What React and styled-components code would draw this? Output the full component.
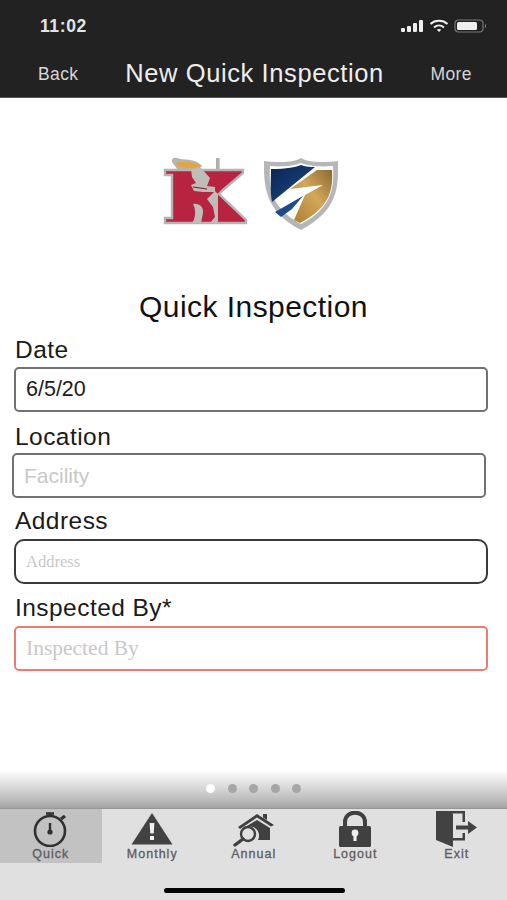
import React from "react";
import styled, { createGlobalStyle } from "styled-components";

const GlobalStyle = createGlobalStyle`
  html, body {
    margin: 0;
    padding: 0;
    background: #fff;
  }
  * {
    box-sizing: border-box;
  }
`;

const Page = styled.div`
  width: 507px;
  height: 900px;
  display: flex;
  flex-direction: column;
  overflow: hidden;
  font-family: "Liberation Sans", Arial, sans-serif;
  background: #fff;
`;

const Header = styled.header`
  height: 98px;
  flex: none;
  background: #222222;
  border-bottom: 1px solid #555;
  color: #eee;
`;

const StatusBar = styled.div`
  height: 52px;
  padding: 0 19px 0 40px;
  display: flex;
  align-items: center;
  justify-content: space-between;
`;

const Time = styled.span`
  font-size: 17.5px;
  font-weight: 700;
  letter-spacing: 0.6px;
  color: #e4e4e4;
`;

const StatusIcons = styled.div`
  display: flex;
  align-items: center;
  gap: 5px;
`;

const NavBar = styled.div`
  height: 45px;
  padding: 0 35px 0 38px;
  display: flex;
  align-items: flex-start;
  justify-content: space-between;
`;

const NavLink = styled.span`
  font-size: 17.5px;
  line-height: 44px;
  letter-spacing: 0.4px;
  color: #d6d6d6;
`;

const NavTitle = styled.span`
  font-size: 25.5px;
  line-height: 43px;
  letter-spacing: 0.6px;
  color: #eeeeee;
`;

const Main = styled.main`
  flex: 1;
  min-height: 0;
  display: flex;
  flex-direction: column;
`;

const Logos = styled.div`
  margin-top: 59px;
  height: 76px;
  padding-left: 163px;
  display: flex;
  align-items: flex-start;
  gap: 15px;
`;

const FormTitle = styled.h1`
  margin: 58px 0 0;
  font-size: 30px;
  line-height: 32px;
  font-weight: 400;
  text-align: center;
  letter-spacing: 0.45px;
  color: #111;
`;

const Form = styled.form`
  margin-top: 4px;
  display: flex;
  flex-direction: column;
`;

const Field = styled.div`
  height: ${(p) => p.$height}px;
  display: flex;
  flex-direction: column;
  justify-content: flex-end;
  padding-left: ${(p) => p.$left}px;
  padding-right: ${(p) => 507 - p.$left - 474}px;
`;

const Label = styled.label`
  font-size: 24.5px;
  line-height: 26px;
  letter-spacing: 0.45px;
  margin: 0 0 ${(p) => p.$gap}px ${(p) => 15 - p.$left}px;
  color: #1a1a1a;
`;

const Input = styled.input`
  width: 100%;
  height: 45px;
  padding: 0 10px;
  background: #fff;
  outline: none;
  border: 2px solid ${(p) => (p.$tone === "error" ? "#ec7a75" : p.$tone === "focus" ? "#3a3a3a" : "#717171")};
  border-radius: ${(p) => (p.$tone === "focus" ? 10 : 5)}px;
  font-family: ${(p) => (p.$serif ? '"Liberation Serif", serif' : '"Liberation Sans", Arial, sans-serif')};
  font-size: ${(p) => p.$size}px;
  color: #1c1c1c;

  &::placeholder {
    color: #c8c8c8;
    opacity: 1;
  }
`;

const Pager = styled.div`
  height: 38px;
  flex: none;
  display: flex;
  align-items: center;
  justify-content: center;
  gap: 12.5px;
  padding: 0 0 2px 0;
  background: linear-gradient(to bottom, #ffffff 0%, #e6e6e6 30%, #bcbcbc 78%, #a2a2a2 100%);
`;

const Dot = styled.span`
  width: 9px;
  height: 9px;
  border-radius: 50%;
  background: ${(p) => (p.$active ? "#ffffff" : "#a6a6a6")};
`;

const TabArea = styled.nav`
  height: 92px;
  flex: none;
  background: #e0e0e0;
  border-top: 1px solid #969696;
  position: relative;
`;

const Tabs = styled.div`
  display: grid;
  grid-template-columns: repeat(5, 101.5px);
  height: 54px;
`;

const Tab = styled.div`
  display: flex;
  flex-direction: column;
  align-items: center;
  justify-content: flex-start;
  padding-top: 2px;
  background: ${(p) => (p.$active ? "#c2c2c2" : "transparent")};
`;

const TabIcon = styled.div`
  height: 36px;
  display: flex;
  align-items: center;
  justify-content: center;
`;

const TabLabel = styled.span`
  font-size: 12.5px;
  line-height: 14px;
  letter-spacing: 1px;
  color: #5c5c5c;
  -webkit-text-stroke: 0.3px #5c5c5c;
`;

const HomeIndicator = styled.div`
  position: absolute;
  left: 164px;
  bottom: 7px;
  width: 181px;
  height: 5px;
  border-radius: 3px;
  background: #050505;
`;

function SignalIcons() {
  return (
    <StatusIcons>
      <svg width="23" height="14" viewBox="0 0 23 14" fill="#eee">
        <rect x="0" y="9" width="4" height="4" rx="1" />
        <rect x="6" y="7" width="4" height="6" rx="1" />
        <rect x="12" y="4" width="4" height="9" rx="1" />
        <rect x="18" y="1" width="4" height="12" rx="1" />
      </svg>
      <svg width="20" height="14" viewBox="0 0 20 14" fill="none" stroke="#eee" strokeWidth="2">
        <path d="M1.5 5 C6 0.8 14 0.8 18.5 5" />
        <path d="M5 8.4 C8 5.8 12 5.8 15 8.4" />
        <path d="M10 13 L7.8 10.8 C9 9.8 11 9.8 12.2 10.8 Z" fill="#eee" stroke="none" />
      </svg>
      <svg width="34" height="14" viewBox="0 0 34 14" fill="none">
        <rect x="1" y="1" width="28" height="12" rx="3.5" stroke="#777" strokeWidth="1.2" />
        <rect x="3" y="3" width="20" height="8" rx="1.5" fill="#eee" />
        <path d="M31 5 C32.4 5.4 32.4 8.6 31 9 Z" fill="#888" />
      </svg>
    </StatusIcons>
  );
}

function KnightLogo() {
  return (
    <svg width="85" height="70" viewBox="0 0 85 70">
      <rect x="53" y="1" width="3.6" height="16" fill="#b3aca8" />
      <path
        d="M2 13 H80 V16 L60 33 L56 37 L83 63 V66 H2 V61 H9 V18 H2 Z"
        fill="#b82340"
        stroke="#b4b4b4"
        strokeWidth="2.4"
      />
      <path d="M9 5 C8 0 13 0 17 2 C24 3 33 2 39 9 L35 13 L14 12 Z" fill="#b9b4ab" />
      <path d="M13 6 C20 4 32 5 39 9 L29 11.5 L15 9.5 Z" fill="#e3a544" />
      <path d="M28 12 L38 11 L47 21 L44 29 L52 30 L52 35 L40 35 L31 34 L28 28 L33 26 L29 20 Z" fill="#c0bdb8" />
      <path d="M30 30 L44 32" stroke="#7d1a2e" strokeWidth="1.2" />
      <path d="M52 34 L55 37 L55 66 H47 L52 60 L50 50 L44 42 Z" fill="#c0bdb8" />
      <path d="M30 47 C36 46 41 50 40 56 L38 66 L29 66 C33 61 33 52 30 47 Z" fill="#c0bdb8" />
    </svg>
  );
}

function ShieldLogo() {
  return (
    <svg width="77" height="74" viewBox="0 0 77 74">
      <defs>
        <linearGradient id="gold" x1="0" y1="1" x2="1" y2="0">
          <stop offset="0" stopColor="#a87c2c" />
          <stop offset="0.55" stopColor="#d3a65a" />
          <stop offset="1" stopColor="#8a6a30" />
        </linearGradient>
        <linearGradient id="blue" x1="0" y1="0" x2="1" y2="1">
          <stop offset="0" stopColor="#0b2350" />
          <stop offset="1" stopColor="#1f4d8e" />
        </linearGradient>
      </defs>
      <path d="M38 1 C44 5 58 6 75 4 C75 26 78 52 38 73 C0 54 1 26 1 4 C18 6 32 5 38 1 Z" fill="#b4b6b8" />
      <path d="M38 6 C45 9 57 10 70 9 C71 28 71 50 38 67 C6 50 6 28 7 9 C19 10 31 9 38 6 Z" fill="#fff" />
      <path d="M8 12 C24 12 33 10 38 8 C44 10 48 10 52 10 L9 45 C7 34 8 22 8 12 Z" fill="url(#blue)" />
      <path d="M54 13 H69 C70 30 69 50 37 66 L31 63 L42 38 L60 28 L27 32 Z" fill="url(#gold)" />
      <path d="M12 55 L40 39 L29 52 L18 60 Z" fill="#1c4a8a" />
    </svg>
  );
}

function StopwatchIcon() {
  return (
    <svg width="38" height="36" viewBox="0 0 38 36" fill="none" stroke="#303030">
      <circle cx="18" cy="20" r="15" strokeWidth="2.6" />
      <path d="M14 2.5 H22 M18 2.5 V6" strokeWidth="2.6" />
      <path d="M29 8 L33 5" strokeWidth="3.4" />
      <path d="M18 12 V21" strokeWidth="2.4" />
      <circle cx="18" cy="21" r="2.6" fill="#303030" stroke="none" />
    </svg>
  );
}

function WarningIcon() {
  return (
    <svg width="42" height="34" viewBox="0 0 42 34">
      <path d="M21 1 L41.5 32.5 H0.5 Z" fill="#424242" />
      <path d="M18.6 11 H23.4 L22.7 21.5 H19.3 Z" fill="#f0f0f0" />
      <rect x="19" y="24" width="4" height="4" fill="#f0f0f0" />
    </svg>
  );
}

function HouseIcon() {
  return (
    <svg width="42" height="36" viewBox="0 0 42 36" fill="none">
      <path d="M5 16 L24 3 L41 14 L38 15.5 L24 6.5 L7 18 Z" fill="#404040" />
      <path d="M30 3 H34 V9 L30 6.5 Z" fill="#404040" />
      <path d="M14 15 L24 9 L37 17 V29 H25 C28 23 25 15 14 15 Z" fill="#404040" />
      <circle cx="15" cy="23" r="7" stroke="#404040" strokeWidth="2.4" fill="#e0e0e0" />
      <path d="M10 28 L2 34" stroke="#404040" strokeWidth="3.4" strokeLinecap="round" />
    </svg>
  );
}

function LockIcon() {
  return (
    <svg width="36" height="36" viewBox="0 0 36 36">
      <path d="M8 16 V11 C8 -1.5 28 -1.5 28 11 V16" fill="none" stroke="#404040" strokeWidth="4" />
      <rect x="2" y="15" width="32" height="21" rx="1.5" fill="#404040" />
      <circle cx="18" cy="22" r="3.4" fill="#eee" />
      <path d="M16.4 23 H19.6 V30 H16.4 Z" fill="#eee" />
    </svg>
  );
}

function ExitIcon() {
  return (
    <svg width="42" height="36" viewBox="0 0 42 36">
      <path d="M0 0 H29 V11 H26.5 V2.5 H16 L17 3 V5 H0 Z" fill="#424242" />
      <path d="M0 1 L17 4 V36 L0 29 Z" fill="#424242" />
      <path d="M17 27 H26.5 V22 H29 V29.5 H17 Z" fill="#424242" />
      <path d="M20 14.5 H32 V10 L41 16.5 L32 23 V18.5 H20 Z" fill="#424242" />
    </svg>
  );
}

const fields = [
  { label: "Date", value: "6/5/20", left: 14, height: 85, gap: 4, size: 21.5 },
  { label: "Location", placeholder: "Facility", left: 12, height: 86, gap: 3, size: 21 },
  { label: "Address", placeholder: "Address", left: 14, height: 86, gap: 5, size: 16.5, serif: true, tone: "focus" },
  { label: "Inspected By*", placeholder: "Inspected By", left: 14, height: 87, gap: 5, size: 21.5, serif: true, tone: "error" },
];

const tabs = [
  { label: "Quick", icon: <StopwatchIcon />, active: true },
  { label: "Monthly", icon: <WarningIcon /> },
  { label: "Annual", icon: <HouseIcon /> },
  { label: "Logout", icon: <LockIcon /> },
  { label: "Exit", icon: <ExitIcon /> },
];

export default function App() {
  return (
    <Page>
      <GlobalStyle />
      <Header>
        <StatusBar>
          <Time>11:02</Time>
          <SignalIcons />
        </StatusBar>
        <NavBar>
          <NavLink>Back</NavLink>
          <NavTitle>New Quick Inspection</NavTitle>
          <NavLink>More</NavLink>
        </NavBar>
      </Header>
      <Main>
        <Logos>
          <KnightLogo />
          <ShieldLogo />
        </Logos>
        <FormTitle>Quick Inspection</FormTitle>
        <Form>
          {fields.map((f) => (
            <Field key={f.label} $height={f.height} $left={f.left}>
              <Label $gap={f.gap} $left={f.left}>{f.label}</Label>
              <Input
                defaultValue={f.value}
                placeholder={f.placeholder}
                $tone={f.tone}
                $size={f.size}
                $serif={f.serif}
              />
            </Field>
          ))}
        </Form>
      </Main>
      <Pager>
        <Dot $active />
        <Dot />
        <Dot />
        <Dot />
        <Dot />
      </Pager>
      <TabArea>
        <Tabs>
          {tabs.map((t) => (
            <Tab key={t.label} $active={t.active}>
              <TabIcon>{t.icon}</TabIcon>
              <TabLabel>{t.label}</TabLabel>
            </Tab>
          ))}
        </Tabs>
        <HomeIndicator />
      </TabArea>
    </Page>
  );
}
